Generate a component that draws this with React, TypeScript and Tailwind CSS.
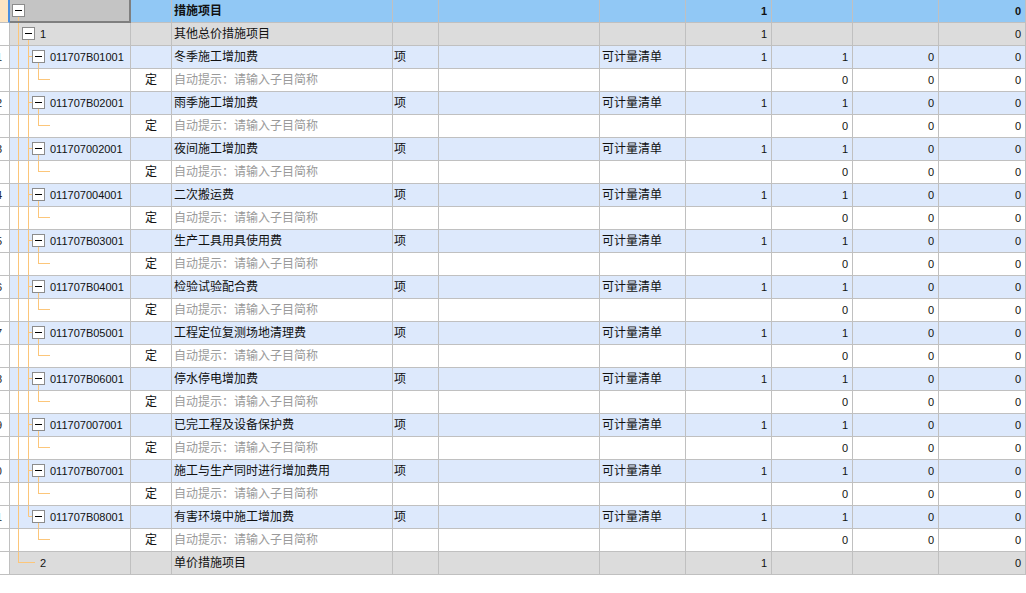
import React from "react";

const ORANGE = "#fcc67a";

const items = [
  ["011707B01001", "冬季施工增加费"],
  ["011707B02001", "雨季施工增加费"],
  ["011707002001", "夜间施工增加费"],
  ["011707004001", "二次搬运费"],
  ["011707B03001", "生产工具用具使用费"],
  ["011707B04001", "检验试验配合费"],
  ["011707B05001", "工程定位复测场地清理费"],
  ["011707B06001", "停水停电增加费"],
  ["011707007001", "已完工程及设备保护费"],
  ["011707B07001", "施工与生产同时进行增加费用"],
  ["011707B08001", "有害环境中施工增加费"],
];

// collapse box drawn at (x, 4)
function Box({ x }: { x: number }) {
  return (
    <g>
      <rect x={x + 0.5} y={4.5} width={12} height={12} fill="#fff" stroke="#8c8c8c" />
      <line x1={x + 3} y1={10.5} x2={x + 10} y2={10.5} stroke="#000" />
    </g>
  );
}

type Kind = "head" | "group" | "item" | "sub" | "end";

function Tree({ kind, last }: { kind: Kind; last?: boolean }) {
  return (
    <svg width="40" height="22" className="shrink-0">
      {kind === "head" && (
        <>
          <line x1={8.5} y1={16} x2={8.5} y2={22} stroke={ORANGE} />
          <Box x={2} />
        </>
      )}
      {kind === "group" && (
        <>
          <line x1={8.5} y1={0} x2={8.5} y2={22} stroke={ORANGE} />
          <line x1={18.5} y1={16} x2={18.5} y2={22} stroke={ORANGE} />
          <Box x={12} />
        </>
      )}
      {kind === "item" && (
        <>
          <line x1={8.5} y1={0} x2={8.5} y2={22} stroke={ORANGE} />
          <line x1={18.5} y1={0} x2={18.5} y2={last ? 10.5 : 22} stroke={ORANGE} />
          <line x1={18.5} y1={10.5} x2={22} y2={10.5} stroke={ORANGE} />
          <line x1={28.5} y1={16} x2={28.5} y2={22} stroke={ORANGE} />
          <Box x={22} />
        </>
      )}
      {kind === "sub" && (
        <>
          <line x1={8.5} y1={0} x2={8.5} y2={22} stroke={ORANGE} />
          {!last && <line x1={18.5} y1={0} x2={18.5} y2={22} stroke={ORANGE} />}
          <line x1={28.5} y1={0} x2={28.5} y2={11} stroke={ORANGE} />
          <line x1={28.5} y1={10.5} x2={40} y2={10.5} stroke={ORANGE} />
        </>
      )}
      {kind === "end" && (
        <>
          <line x1={8.5} y1={0} x2={8.5} y2={11} stroke={ORANGE} />
          <line x1={8.5} y1={10.5} x2={25} y2={10.5} stroke={ORANGE} />
        </>
      )}
    </svg>
  );
}

const cell = "h-[23px] border-r border-b border-[#c0c0c0] flex items-center overflow-hidden whitespace-nowrap";
const num = cell + " justify-end pr-[4px] text-[11px]";

// row number column is scrolled so only a sliver of each number shows
function RowNo({ n }: { n?: string }) {
  return (
    <div className={cell + " bg-white justify-end pr-[7px] text-[11px] text-[#222]"}>
      <span className="shrink-0">{n}</span>
    </div>
  );
}

function Row({
  bg,
  kind,
  last,
  code,
  n,
  ding,
  name,
  hint,
  unit,
  type,
  c7,
  c8,
  c9,
  c10,
}: {
  bg: string;
  kind: Kind;
  last?: boolean;
  code?: string;
  n?: string;
  ding?: boolean;
  name?: string;
  hint?: boolean;
  unit?: string;
  type?: string;
  c7?: string;
  c8?: string;
  c9?: string;
  c10?: string;
}) {
  const indent = kind === "group" || kind === "end" ? "w-[30px]" : "w-[40px]";
  return (
    <>
      <RowNo n={n} />
      <div className={cell + " " + bg}>
        <div className={indent + " shrink-0 overflow-hidden flex"}>
          <Tree kind={kind} last={last} />
        </div>
        <span className="text-[11px] text-[#111]">{code}</span>
      </div>
      <div className={cell + " " + bg + " justify-center text-[12px]"}>{ding ? "定" : ""}</div>
      <div className={cell + " " + bg + " pl-[2px] text-[12px] " + (hint ? "text-[#9a9a9a]" : "text-[#111]")}>
        {hint ? "自动提示：请输入子目简称" : name}
      </div>
      <div className={cell + " " + bg + " pl-[1px] text-[12px]"}>{unit}</div>
      <div className={cell + " " + bg}></div>
      <div className={cell + " " + bg + " pl-[2px] text-[12px]"}>{type}</div>
      <div className={num + " " + bg}>{c7}</div>
      <div className={num + " " + bg}>{c8}</div>
      <div className={num + " " + bg}>{c9}</div>
      <div className={num + " " + bg}>{c10}</div>
    </>
  );
}

export default function App() {
  const gray = "bg-[#dcdcdc]";
  const blue = "bg-[#dde9fc]";
  const head = "bg-[#91c8f5]";
  return (
    <div
      className="w-[1026px] h-[593px] bg-white overflow-hidden text-[#111]"
      style={{ fontFamily: '"Liberation Sans", "Noto Sans CJK SC", sans-serif' }}
    >
      <div className="grid grid-cols-[10px_121px_41px_221px_46px_161px_86px_86px_81px_86px_87px]">
        {/* header row */}
        <div className="h-[23px] bg-[#fde5c3] border-r-2 border-r-[#4a8fe0] border-b border-[#c0c0c0]"></div>
        <div className="h-[23px] bg-[#c4c4c4] border-r-2 border-b-2 border-[#7f7f7f] flex items-start overflow-hidden">
          <Tree kind="head" />
        </div>
        <div className={cell + " " + head}></div>
        <div className={cell + " " + head + " pl-[2px] text-[12px] font-bold"}>措施项目</div>
        <div className={cell + " " + head}></div>
        <div className={cell + " " + head}></div>
        <div className={cell + " " + head}></div>
        <div className={num + " " + head + " font-bold"}>1</div>
        <div className={cell + " " + head}></div>
        <div className={cell + " " + head}></div>
        <div className={num + " " + head + " font-bold"}>0</div>

        <Row bg={gray} kind="group" code="1" name="其他总价措施项目" c7="1" c10="0" />

        {items.map(([code, name], i) => {
          const last = i === items.length - 1;
          return (
            <React.Fragment key={code}>
              <Row
                bg={blue}
                kind="item"
                last={last}
                n={String(i + 1)}
                code={code}
                name={name}
                unit="项"
                type="可计量清单"
                c7="1"
                c8="1"
                c9="0"
                c10="0"
              />
              <Row bg="bg-white" kind="sub" last={last} ding hint c8="0" c9="0" c10="0" />
            </React.Fragment>
          );
        })}

        <Row bg={gray} kind="end" code="2" name="单价措施项目" c7="1" c10="0" />
      </div>
    </div>
  );
}
